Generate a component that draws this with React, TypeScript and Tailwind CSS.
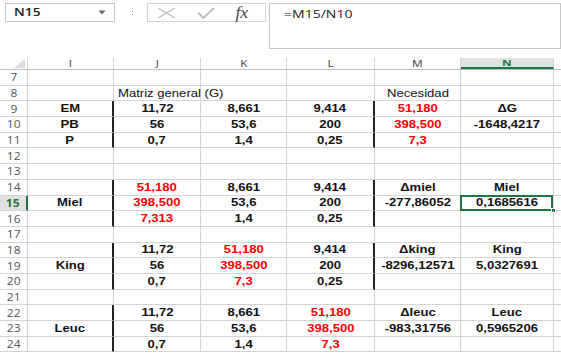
import React from "react";

type Cell = { v?: string; red?: boolean; plain?: boolean };

// I, J, K, L, M, N
const COLS = ["I", "J", "K", "L", "M", "N"];
const WIDTHS = ["w-[86px]", "w-[87px]", "w-[86px]", "w-[88px]", "w-[86px]", "w-[93px]"];

const r = (v: string): Cell => ({ v, red: true });
const b = (v: string): Cell => ({ v });
const e: Cell = {};

type Row = { n: number; cells: Cell[]; thick?: number[] };

const ROWS: Row[] = [
  { n: 7, cells: [e, e, e, e, e, e] },
  { n: 8, cells: [e, { v: "Matriz general (G)", plain: true }, e, e, { v: "Necesidad", plain: true }, e] },
  { n: 9, cells: [b("EM"), b("11,72"), b("8,661"), b("9,414"), r("51,180"), b("ΔG")], thick: [0, 3] },
  { n: 10, cells: [b("PB"), b("56"), b("53,6"), b("200"), r("398,500"), b("-1648,4217")], thick: [0, 3] },
  { n: 11, cells: [b("P"), b("0,7"), b("1,4"), b("0,25"), r("7,3"), e], thick: [0, 3] },
  { n: 12, cells: [e, e, e, e, e, e] },
  { n: 13, cells: [e, e, e, e, e, e] },
  { n: 14, cells: [e, r("51,180"), b("8,661"), b("9,414"), b("Δmiel"), b("Miel")], thick: [0, 3] },
  { n: 15, cells: [b("Miel"), r("398,500"), b("53,6"), b("200"), b("-277,86052"), b("0,1685616")], thick: [0, 3] },
  { n: 16, cells: [e, r("7,313"), b("1,4"), b("0,25"), e, e], thick: [0, 3] },
  { n: 17, cells: [e, e, e, e, e, e] },
  { n: 18, cells: [e, b("11,72"), r("51,180"), b("9,414"), b("Δking"), b("King")], thick: [0, 3] },
  { n: 19, cells: [b("King"), b("56"), r("398,500"), b("200"), b("-8296,12571"), b("5,0327691")], thick: [0, 3] },
  { n: 20, cells: [e, b("0,7"), r("7,3"), b("0,25"), e, e], thick: [0, 3] },
  { n: 21, cells: [e, e, e, e, e, e] },
  { n: 22, cells: [e, b("11,72"), b("8,661"), r("51,180"), b("Δleuc"), b("Leuc")], thick: [0] },
  { n: 23, cells: [b("Leuc"), b("56"), b("53,6"), r("398,500"), b("-983,31756"), b("0,5965206")], thick: [0] },
  { n: 24, cells: [e, b("0,7"), b("1,4"), r("7,3"), e, e], thick: [0] },
];

function Toolbar() {
  return (
    <div className="flex h-[58px] items-start pt-[3px] pl-[5px]">
      <div className="flex h-[19px] w-[110px] items-center border border-[#c6c6c6] pl-[8px] pr-[8px] font-['Open_Sans',sans-serif] text-[11px] text-[#222]">
        <span className="inline-block flex-1">
          <span className="inline-block origin-left scale-x-[1.25] font-semibold">N15</span>
        </span>
        <svg width="8" height="5" viewBox="0 0 8 5">
          <path d="M0.5 0.5 L7.5 0.5 L4 4.5 Z" fill="#666" />
        </svg>
      </div>
      <div className="ml-[17px] mr-[14px] mt-[5px] flex flex-col gap-[2px]">
        <div className="h-[1px] w-[1px] bg-[#999]" />
        <div className="h-[1px] w-[1px] bg-[#999]" />
        <div className="h-[1px] w-[1px] bg-[#999]" />
      </div>
      <div className="flex h-[19px] w-[119px] items-center border border-[#d4d4d4] pl-[9px]">
        <svg width="19" height="12" viewBox="0 0 19 12">
          <path d="M1 1 L18 11 M18 1 L1 11" stroke="#bdbdbd" strokeWidth="1.3" fill="none" />
        </svg>
        <svg className="ml-[21px]" width="18" height="12" viewBox="0 0 18 12">
          <path d="M1 5.5 L6.5 11 L17 1" stroke="#bdbdbd" strokeWidth="1.8" fill="none" />
        </svg>
        <span className="ml-[21px] inline-block scale-x-[1.1] font-['Liberation_Serif',serif] text-[16px] italic leading-none text-[#444]">
          fx
        </span>
      </div>
      <div className="ml-[3px] h-[46px] flex-1 border border-[#c6c6c6] pl-[14px] pt-[1px] font-['Open_Sans',sans-serif] text-[11.5px] text-[#222]">
        <span className="inline-block origin-left scale-x-[1.22]">=M15/N10</span>
      </div>
    </div>
  );
}

function HeaderRow() {
  return (
    <div className="flex h-[12px] border-b border-[#bdbdbd] font-['Open_Sans',sans-serif] text-[9.5px] leading-none text-[#444]">
      <div className="relative w-[28px] border-r border-[#d4d4d4]">
        <svg className="absolute bottom-[1px] right-[2px]" width="11" height="9" viewBox="0 0 11 9">
          <path d="M11 0 L11 9 L0 9 Z" fill="#dcdcdc" />
        </svg>
      </div>
      {COLS.map((c, i) => (
        <div
          key={c}
          className={`${WIDTHS[i]} flex items-center justify-center border-r border-[#d4d4d4] ${
            c === "N" ? "border-b-2 border-b-[#217346] bg-[#e1e1e1] font-bold text-[#217346]" : ""
          }`}
        >
          <span className="inline-block scale-x-[1.25]">{c}</span>
        </div>
      ))}
      <div className="flex-1" />
    </div>
  );
}

function GridRow({ row }: { row: Row }) {
  const sel = row.n === 15;
  return (
    <div className="flex h-[15.7px] font-['Liberation_Sans',Arial,sans-serif] text-[11px] leading-none">
      <div
        className={`flex w-[28px] items-center justify-center font-['Open_Sans',sans-serif] text-[10px] ${
          sel
            ? "border-r-2 border-r-[#217346] bg-[#e1e1e1] font-bold text-[#217346]"
            : "border-r border-[#d4d4d4] text-[#555]"
        } border-b border-b-[#d4d4d4]`}
      >
        <span className="inline-block scale-x-[1.2]">{row.n}</span>
      </div>
      {row.cells.map((c, i) => {
        const thickRight = row.thick?.includes(i);
        const selected = sel && i === 5;
        const isNeed = c.v === "Necesidad";
        return (
          <div
            key={i}
            className={`${WIDTHS[i]} relative flex items-center border-b border-[#d4d4d4] ${
              thickRight ? "border-r-2 border-r-[#222]" : "border-r border-r-[#d4d4d4]"
            } ${
              c.plain
                ? `${isNeed ? "justify-center" : "justify-start pl-[4px]"} overflow-visible whitespace-nowrap font-normal text-[#111]`
                : "justify-center font-bold"
            } ${c.red ? "text-[#ff0000]" : c.plain ? "" : "text-[#111]"}`}
          >
            <span
              className={`relative z-10 inline-block scale-x-[1.19] whitespace-nowrap ${
                c.plain && !isNeed ? "origin-left" : ""
              }`}
            >
              {c.v}
            </span>
            {selected && (
              <>
                <div className="absolute -left-[1px] -top-[1px] bottom-[-1px] right-0 border-2 border-[#217346]" />
                <div className="absolute bottom-[-3px] right-[-3px] h-[5px] w-[5px] border border-white bg-[#217346]" />
              </>
            )}
          </div>
        );
      })}
      <div className="flex-1 border-b border-[#d4d4d4]" />
    </div>
  );
}

export default function App() {
  return (
    <div className="h-[354px] w-[561px] overflow-hidden bg-white">
      <Toolbar />
      <HeaderRow />
      {ROWS.map((row) => (
        <GridRow key={row.n} row={row} />
      ))}
    </div>
  );
}
